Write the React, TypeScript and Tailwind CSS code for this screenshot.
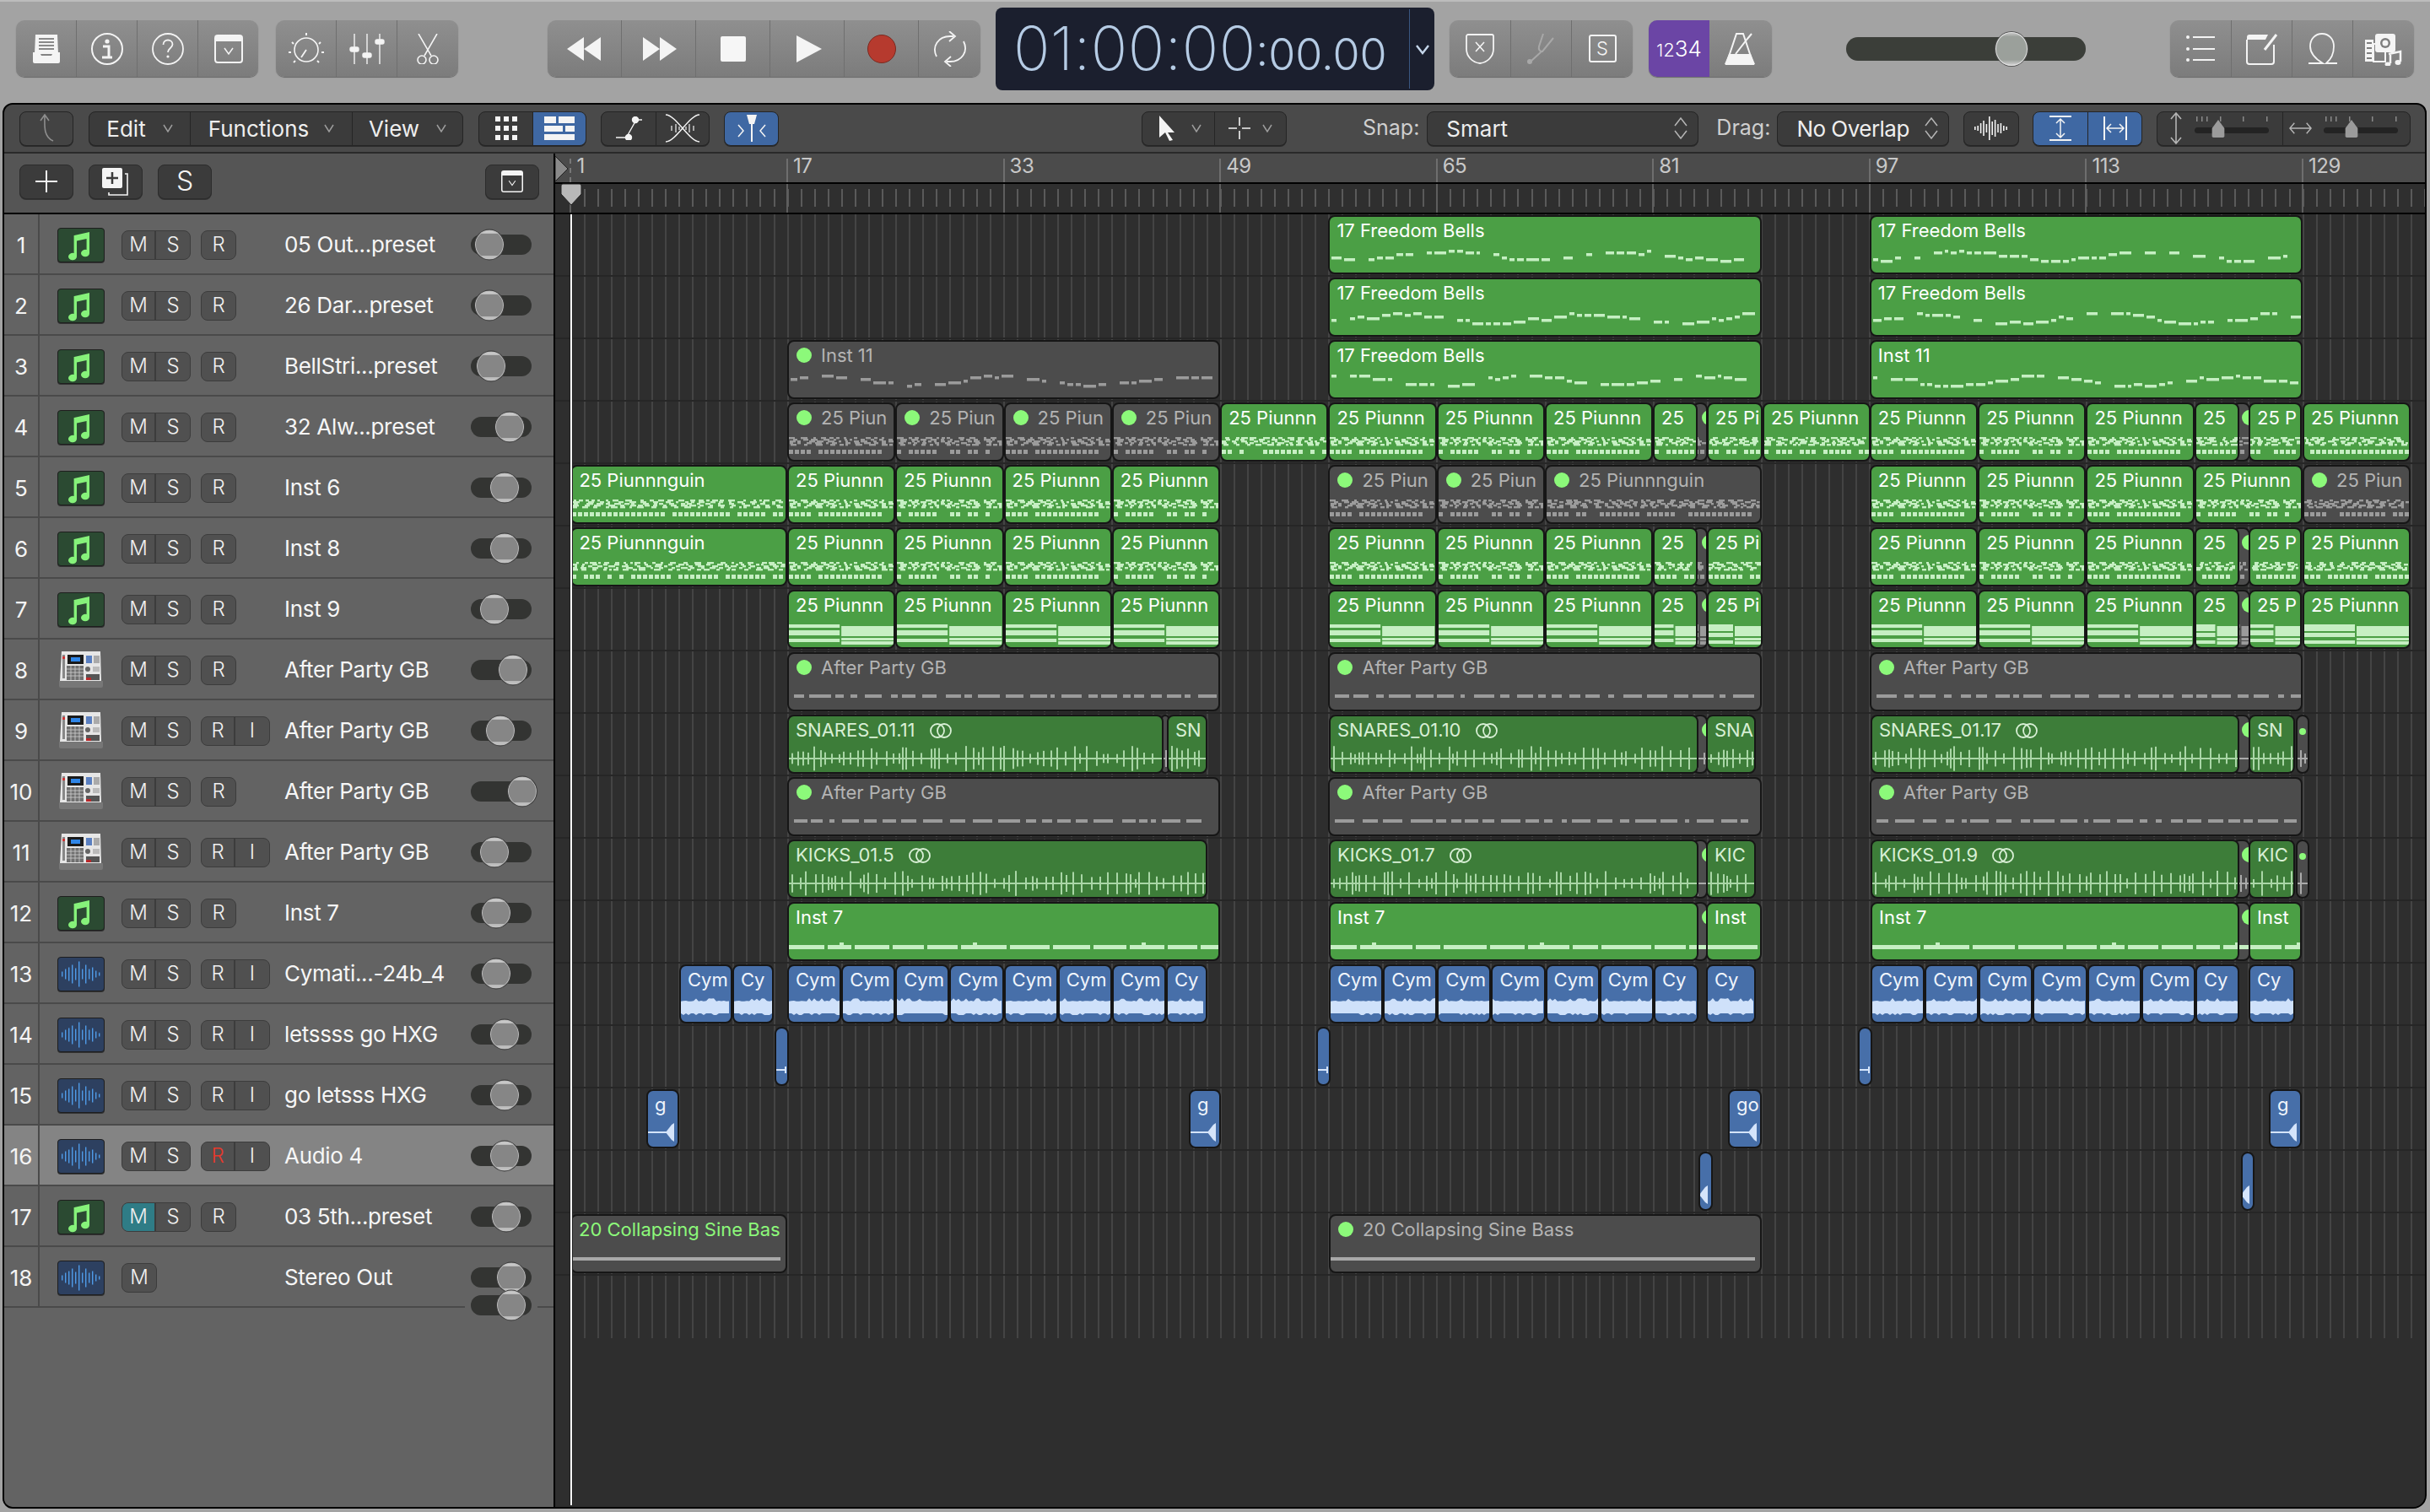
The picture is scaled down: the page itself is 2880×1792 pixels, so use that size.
import React from 'react';

const rnd = (s: number) => { const v = Math.sin(s * 12.9898 + 4.1) * 43758.5453; return v - Math.floor(v); };
const bar = (n: number) => 676.4 + 16.036 * (n - 1);

type Kind = 'green' | 'dark' | 'grey' | 'blue';
type Pat = 'dense' | 'lines' | 'melody' | 'party' | 'wave' | 'inst7' | 'cym' | 'tiny' | 'g' | 'sine' | 'none';
type Reg = { x1: number; x2: number; label?: string; kind: Kind; pat: Pat; seed: number; dot?: boolean; loop?: boolean; lime?: boolean; small?: boolean };

let sd = 1;
const mk = (x1: number, x2: number, label: string | undefined, kind: Kind, pat: Pat, extra: Partial<Reg> = {}): Reg => ({ x1, x2, label, kind, pat, seed: sd++ * 7, dot: kind === 'grey' && !!label, ...extra });

const PN = '25 Piunnn';
const pieces = (bars: number[], label: string, kind: Kind, pat: Pat) => bars.slice(0, -1).map((b, i) => mk(bar(b), bar(bars[i + 1]), label, kind, pat, { seed: (i % 2) * 100 + 11 }));

const slit = (pat: Pat) => [mk(2006, 2024, ' ', 'grey', pat), mk(2646, 2667, ' ', 'grey', pat)];
const rest = (pat: Pat, withMid: boolean) => [
  ...slit(pat),
  ...pieces([57, 65, 73, 81], PN, 'green', pat),
  mk(1959, 2012, '25', 'green', pat),
  mk(2023, 2089, '25 Pi', 'green', pat),
  ...(withMid ? [mk(2089, 2217, PN, 'green', pat)] : []),
  ...pieces([97, 105, 113, 121], PN, 'green', pat),
  mk(2601, 2654, '25', 'green', pat),
  mk(2665, 2728, '25 P', 'green', pat),
  mk(2729, 2857, PN, 'green', pat),
];

const cymGroup = (start: number, n: number, end: number) => {
  const out: Reg[] = [];
  for (let i = 0; i < n; i++) out.push(mk(start + i * 64.15, start + (i + 1) * 64.15, 'Cym', 'blue', 'cym'));
  out.push(mk(start + n * 64.15, end, 'Cy', 'blue', 'cym'));
  return out;
};

const FB = '17 Freedom Bells';
const AP = 'After Party GB';
const regionRows: Reg[][] = [
  [mk(bar(57), bar(89), FB, 'green', 'melody'), mk(bar(97), bar(129), FB, 'green', 'melody')],
  [mk(bar(57), bar(89), FB, 'green', 'melody'), mk(bar(97), bar(129), FB, 'green', 'melody')],
  [mk(bar(17), bar(49), 'Inst 11', 'grey', 'melody'), mk(bar(57), bar(89), FB, 'green', 'melody'), mk(bar(97), bar(129), 'Inst 11', 'green', 'melody')],
  [...pieces([17, 25, 33, 41, 49], '25 Piun', 'grey', 'dense'), mk(bar(49), bar(57), PN, 'green', 'dense'), ...rest('dense', true)],
  [
    mk(bar(1), bar(17), '25 Piunnnguin', 'green', 'dense'),
    ...pieces([17, 25, 33, 41, 49], PN, 'green', 'dense'),
    ...pieces([57, 65, 73], '25 Piun', 'grey', 'dense'),
    mk(bar(73), bar(89), '25 Piunnnguin', 'grey', 'dense'),
    ...pieces([97, 105, 113, 121, 129], PN, 'green', 'dense'),
    mk(bar(129), bar(137), '25 Piun', 'grey', 'dense'),
  ],
  [mk(bar(1), bar(17), '25 Piunnnguin', 'green', 'dense'), ...pieces([17, 25, 33, 41, 49], PN, 'green', 'dense'), ...rest('dense', false)],
  [...pieces([17, 25, 33, 41, 49], PN, 'green', 'lines'), ...rest('lines', false)],
  [mk(bar(17), bar(49), AP, 'grey', 'party'), mk(bar(57), bar(89), AP, 'grey', 'party'), mk(bar(97), bar(129), AP, 'grey', 'party')],
  [
    mk(1376, 1386, ' ', 'grey', 'wave'),
    mk(933, 1379, 'SNARES_01.11', 'dark', 'wave', { loop: true }),
    mk(1383, 1431, 'SN', 'dark', 'wave'),
    ...slit('wave'),
    mk(1575, 2013, 'SNARES_01.10', 'dark', 'wave', { loop: true }),
    mk(2022, 2081, 'SNA', 'dark', 'wave'),
    mk(2217, 2654, 'SNARES_01.17', 'dark', 'wave', { loop: true }),
    mk(2665, 2720, 'SN', 'dark', 'wave'),
    mk(2721, 2737, ' ', 'grey', 'wave', { small: true }),
  ],
  [mk(bar(17), bar(49), AP, 'grey', 'party'), mk(bar(57), bar(89), AP, 'grey', 'party'), mk(bar(97), bar(129), AP, 'grey', 'party')],
  [
    mk(933, 1431, 'KICKS_01.5', 'dark', 'wave', { loop: true }),
    ...slit('wave'),
    mk(1575, 2013, 'KICKS_01.7', 'dark', 'wave', { loop: true }),
    mk(2022, 2081, 'KIC', 'dark', 'wave'),
    mk(2217, 2654, 'KICKS_01.9', 'dark', 'wave', { loop: true }),
    mk(2665, 2720, 'KIC', 'dark', 'wave'),
    mk(2721, 2737, ' ', 'grey', 'wave', { small: true }),
  ],
  [
    mk(bar(17), bar(49), 'Inst 7', 'green', 'inst7'),
    ...slit('inst7'),
    mk(1575, 2013, 'Inst 7', 'green', 'inst7'),
    mk(2022, 2088, 'Inst', 'green', 'inst7'),
    mk(2217, 2654, 'Inst 7', 'green', 'inst7'),
    mk(2665, 2728, 'Inst', 'green', 'inst7'),
  ],
  [
    mk(805, 868, 'Cym', 'blue', 'cym'), mk(868, 917, 'Cy', 'blue', 'cym'),
    ...cymGroup(933, 7, 1431),
    ...cymGroup(1575, 6, 2013), mk(2022, 2081, 'Cy', 'blue', 'cym'),
    ...cymGroup(2217, 6, 2654), mk(2665, 2720, 'Cy', 'blue', 'cym'),
  ],
  [mk(918, 935, undefined, 'blue', 'tiny'), mk(1560, 1577, undefined, 'blue', 'tiny'), mk(2202, 2219, undefined, 'blue', 'tiny')],
  [mk(766, 805, 'g', 'blue', 'g'), mk(1409, 1447, 'g', 'blue', 'g'), mk(2048, 2088, 'go', 'blue', 'g'), mk(2689, 2728, 'g', 'blue', 'g')],
  [mk(2013, 2030, undefined, 'blue', 'g'), mk(2656, 2672, undefined, 'blue', 'g')],
  [mk(676, 933, '20 Collapsing Sine Bas', 'grey', 'sine', { dot: false, lime: true }), mk(1575, 2088, '20 Collapsing Sine Bass', 'grey', 'sine')],
];

function Notes({ r, w }: { r: Reg; w: number }) {
  const green = r.kind === 'green';
  const c = green ? '#c6efc3' : r.kind === 'grey' ? '#9b9b9b' : '#c6efc3';
  const items: React.ReactNode[] = [];
  const s = r.seed;
  if (r.pat === 'dense') {
    let i = 0;
    for (const y of [39, 41, 43, 45, 47]) {
      let x = Math.floor(rnd(s + y) * 6);
      while (x < w - 3) {
        i++;
        const len = 3 + Math.floor(rnd(s + i * 3.1) * 6);
        items.push(<rect key={i} x={x} y={y} width={Math.min(len, w - x)} height={2.4} fill={c} />);
        x += len + 2 + Math.floor(rnd(s + i * 1.3) * 9);
      }
    }
    for (let x = 0; x < w - 4; x += 7) {
      i++;
      if (rnd(s + i * 1.7) > 0.2) items.push(<rect key={i} x={x} y={54} width={5} height={5} fill={c} />);
    }
  } else if (r.pat === 'lines') {
    const h = w / 2;
    const a = s % 2 === 0 ? [[39, 8], [49, 5], [58, 4]] : [[39, 4], [46, 6], [56, 4]];
    const b = [[41, 12], [55, 3], [59, 4]];
    a.forEach((v, k) => items.push(<rect key={'a' + k} x={0} y={v[0]} width={h - 2} height={v[1]} fill={c} />));
    b.forEach((v, k) => items.push(<rect key={'b' + k} x={h} y={v[0]} width={h} height={v[1]} fill={c} />));
  } else if (r.pat === 'melody') {
    let x = 2, i = 0;
    while (x < w - 8) {
      i++;
      const len = 4 + Math.floor(rnd(s + i) * 12);
      const y = 45 + Math.round((Math.sin(x / 34 + s) * 5 + rnd(s + i * 2.3) * 4 - 2) / 2) * 2;
      items.push(<rect key={i} x={x} y={y} width={len} height={3.5} fill={c} />);
      x += len + (rnd(s + i * 5.1) > 0.8 ? 16 : 3);
    }
  } else if (r.pat === 'party') {
    let x = 6, i = 0;
    while (x < w - 12) {
      i++;
      const len = 5 + Math.floor(rnd(s + i) * 22);
      items.push(<rect key={i} x={x} y={48} width={len} height={4} fill={c} />);
      x += len + 4 + Math.floor(rnd(s + i * 3) * 8);
    }
  } else if (r.pat === 'inst7') {
    let x = 0, i = 0;
    while (x < w - 2) {
      i++;
      const len = Math.min(w - x, 28 + Math.floor(rnd(s + i) * 36));
      items.push(<rect key={i} x={x} y={49} width={len} height={5} fill="#c6efc3" />);
      if (i % 4 === 2) items.push(<rect key={'u' + i} x={x + 14} y={46} width={5} height={4} fill="#c6efc3" />);
      x += len + 4;
    }
  } else if (r.pat === 'wave') {
    const col = r.kind === 'grey' ? '#aaa' : '#a9d6a6';
    items.push(<rect key="l" x={0} y={49} width={w} height={2} fill={col} />);
    let i = 0;
    for (let x = 3; x < w - 2; x += 4 + Math.floor(rnd(s + x) * 9)) {
      i++;
      const h = 5 + rnd(s + i * 2.7) * 10;
      items.push(<rect key={i} x={x} y={50 - h} width={2} height={h * 2} fill={col} />);
    }
  } else if (r.pat === 'cym') {
    let top = 'M0 58 L0 41';
    let bot = '';
    for (let x = 0; x <= w; x += 3) {
      const t = 42 - (rnd(s + x) > 0.86 ? 3 : 0) - rnd(x + 1) * 1;
      const b = 56 + (rnd(s + x * 2) > 0.7 ? 2 : 0);
      top += ` L${x} ${t}`;
      bot = ` L${x} ${b}` + bot;
    }
    items.push(<path key="c" d={top + bot + 'Z'} fill="#cfe1fa" />);
  } else if (r.pat === 'tiny') {
    items.push(<rect key="a" x={0} y={48} width={12} height={2} fill="#d5e4fa" />);
    items.push(<rect key="b" x={10} y={45} width={2} height={8} fill="#d5e4fa" />);
  } else if (r.pat === 'g') {
    items.push(<rect key="a" x={0} y={48} width={w - 8} height={2} fill="#d5e4fa" />);
    items.push(<polygon key="b" points={`${w - 14},49 ${w - 7},40 ${w - 4},38 ${w - 4},60 ${w - 7},58`} fill="#d5e4fa" />);
  } else if (r.pat === 'sine') {
    items.push(<rect key="a" x={0} y={49} width={w - 6} height={4} fill="#a8a8a8" />);
  }
  return <svg className="absolute left-0 top-0" width={w} height={66}>{items}</svg>;
}

const regBg: Record<Kind, string> = {
  green: 'bg-[#4b9f45] text-white',
  dark: 'bg-[#3d7d39] text-[#d8efd5]',
  grey: 'bg-[#4c4c4c] text-[#b4b4b4]',
  blue: 'bg-[#476fa9] text-[#f0f5fc]',
};

function Region({ r }: { r: Reg }) {
  const w = r.x2 - r.x1;
  return (
    <div className={`absolute top-px h-[70px] rounded-[8px] border-2 border-[#161616] overflow-hidden ${regBg[r.kind]}`} style={{ left: r.x1 - 658, width: w }}>
      <Notes r={r} w={w - 4} />
      {r.dot && !r.small && <span className="absolute left-[9px] top-[7px] size-[18px] rounded-full bg-[#8cf97a]" />}
      {r.small && <span className="absolute left-[2px] top-[14px] size-[8px] rounded-full bg-[#8cf97a]" />}
      {r.label && r.label !== ' ' && (
        <span className={`absolute top-[3px] flex items-center text-[22px] leading-[26px] whitespace-nowrap ${r.dot ? 'left-[38px]' : 'left-[8px]'} ${r.lime ? 'text-[#8cf97a]' : ''}`}>
          {r.label}
          {r.loop && (
            <svg className="ml-[16px] mt-[2px]" width="28" height="18" viewBox="0 0 28 18" fill="none" stroke="#d8efd5" strokeWidth="1.8"><ellipse cx="10" cy="9" rx="8" ry="8" /><ellipse cx="18" cy="9" rx="8" ry="8" /></svg>
          )}
        </span>
      )}
    </div>
  );
}

/* ------- icons ------- */
const W = '#f4f4f4';
const Library = () => (
  <svg width="34" height="36" viewBox="0 0 34 36"><path d="M4 1h26l1 23H3z" fill={W} /><path d="M8 6h18M8 10h18M8 14h18M8 18h18" stroke="#8a8a8a" strokeWidth="2" /><path d="M1 22h8l2 4h12l2-4h8v11a2 2 0 0 1-2 2H3a2 2 0 0 1-2-2z" fill={W} /></svg>
);
const Info = () => (
  <svg width="40" height="40" viewBox="0 0 40 40" fill="none"><circle cx="20" cy="20" r="18" stroke={W} strokeWidth="2" /><circle cx="20" cy="11" r="2.6" fill={W} /><path d="M15 17h7v12M14 30h12" stroke={W} strokeWidth="3" /></svg>
);
const Help = () => (
  <svg width="40" height="40" viewBox="0 0 40 40" fill="none"><circle cx="20" cy="20" r="18" stroke={W} strokeWidth="1.8" /><path d="M14.5 15c0-3.5 2.5-5.5 5.5-5.5s5.5 2 5.5 5c0 4.5-5.5 4.5-5.5 9.5" stroke={W} strokeWidth="1.8" /><circle cx="20" cy="29" r="1.6" fill={W} /></svg>
);
const Smart = ({ s = 34 }: { s?: number }) => (
  <svg width={s} height={s} viewBox="0 0 34 34" fill="none"><rect x="1" y="1" width="32" height="32" rx="3" stroke={W} strokeWidth="2" /><path d="M1 8V4a3 3 0 0 1 3-3h26a3 3 0 0 1 3 3v4z" fill={W} /><path d="M12 16l5 7 5-7" stroke={W} strokeWidth="1.5" /></svg>
);
const Dial = () => (
  <svg width="44" height="40" viewBox="0 0 44 40" fill="none" stroke={W}><circle cx="22" cy="21" r="14" strokeWidth="1.6" /><path d="M22 21l-6 9" strokeWidth="1.8" /><path d="M22 1v3M5 12l2 2M39 12l-2 2M1 24h3M43 24h-3M7 36l2-2M37 36l-2-2" strokeWidth="2" /></svg>
);
const Sliders = () => (
  <svg width="42" height="36" viewBox="0 0 42 36" fill="none" stroke={W} strokeWidth="1.4"><path d="M6 0v36M21 0v36M36 0v36" /><rect x="1" y="16" width="10" height="5" rx="2" fill={W} /><rect x="16" y="23" width="10" height="5" rx="2" fill={W} /><rect x="31" y="7" width="10" height="5" rx="2" fill={W} /></svg>
);
const Scissors = () => (
  <svg width="28" height="36" viewBox="0 0 28 36" fill="none" stroke={W} strokeWidth="1.6"><path d="M3 0l15 26M25 0L10 26" /><ellipse cx="7" cy="31" rx="5" ry="5" /><ellipse cx="21" cy="31" rx="5" ry="5" /></svg>
);
const Rew = () => <svg width="42" height="28" viewBox="0 0 42 28" fill={W}><path d="M0 14L20 0v28zM20 14L40 0v28z" /></svg>;
const Ffw = () => <svg className="ml-[4px]" width="42" height="28" viewBox="0 0 42 28" fill={W}><path d="M0 0l20 14L0 28zM20 0l20 14-20 14z" /></svg>;
const Cycle = () => (
  <svg width="42" height="42" viewBox="0 0 42 42" fill="none" stroke={W} strokeWidth="1.8"><path d="M5 30C-1 18 7 6 21 6h4" /><path d="M20 0l7 6-7 6" /><path d="M37 12c6 12-2 24-16 24h-4" /><path d="M22 30l-7 6 7 6" /></svg>
);
const Shield = () => (
  <svg width="34" height="36" viewBox="0 0 34 36" fill="none" stroke={W} strokeWidth="1.8"><path d="M3 1h28a2 2 0 0 1 2 2v15c0 9-7 16-16 17C8 34 1 27 1 18V3a2 2 0 0 1 2-2z" /><path d="M12 10l10 11M22 10L12 21" strokeWidth="1.6" /></svg>
);
const Fork = () => (
  <svg width="36" height="38" viewBox="0 0 36 38" fill="none" stroke="#a8a8a8" strokeWidth="2"><path d="M20 1l-5 15c-1 4 1 6 4 6l13-16M18 22L5 34" /><circle cx="4" cy="34" r="3" fill="#a8a8a8" stroke="none" /></svg>
);
const Metro = () => (
  <svg width="40" height="40" viewBox="0 0 40 40"><path d="M15 2h8l12 36H3z" fill="none" stroke={W} strokeWidth="2" /><path d="M6 26h26l5 12H1z" fill={W} /><path d="M14 26L28 8l5-6" stroke={W} strokeWidth="2" /></svg>
);
const ListI = () => (
  <svg width="34" height="34" viewBox="0 0 34 34" fill="none" stroke={W} strokeWidth="2"><path d="M8 3h26M8 17h26M8 30h26" /><circle cx="2" cy="3" r="2" fill={W} stroke="none" /><circle cx="2" cy="17" r="2" fill={W} stroke="none" /><circle cx="2" cy="30" r="2" fill={W} stroke="none" /></svg>
);
const Note = () => (
  <svg width="38" height="38" viewBox="0 0 38 38" fill="none"><path d="M1 8V34a3 3 0 0 0 3 3h26a3 3 0 0 0 3-3V14" stroke={W} strokeWidth="2" /><path d="M1 8V5a3 3 0 0 1 3-3h22l-3 6z" fill={W} /><path d="M22 20L36 2" stroke={W} strokeWidth="3" /></svg>
);
const Loops = () => (
  <svg width="36" height="38" viewBox="0 0 36 38" fill="none" stroke={W} strokeWidth="1.8"><path d="M1 36h17C8 30 3 24 3 16 3 7 9 1 17 1s14 6 14 15c0 8-3 15-9 20h13" /></svg>
);
const Media = () => (
  <svg width="44" height="40" viewBox="0 0 44 40"><rect x="0" y="9" width="10" height="26" fill={W} /><path d="M2 13h6M2 19h6M2 25h6M2 31h6" stroke="#7e7e7e" strokeWidth="2" /><rect x="10" y="14" width="14" height="21" fill="none" stroke={W} strokeWidth="2" /><rect x="12" y="2" width="24" height="22" rx="3" fill={W} /><circle cx="24" cy="13" r="6" fill="#7e7e7e" /><circle cx="24" cy="13" r="3.5" fill={W} /><path d="M28 26l14-3v12" stroke={W} strokeWidth="2.5" fill="none" /><ellipse cx="39" cy="36" rx="3.5" ry="3" fill={W} /><ellipse cx="27" cy="38" rx="3.5" ry="2.5" fill={W} /><path d="M30 27v10" stroke={W} strokeWidth="2.5" /></svg>
);
const Chevron = ({ c = '#9c9c9c' }: { c?: string }) => (
  <svg width="12" height="10" viewBox="0 0 12 10" fill="none" stroke={c} strokeWidth="1.5"><path d="M1 1l5 8 5-8" /></svg>
);
const UpDown = () => (
  <svg width="16" height="26" viewBox="0 0 16 26" fill="none" stroke="#b5b5b5" strokeWidth="1.5"><path d="M1 10l7-9 7 9M1 16l7 9 7-9" /></svg>
);

const NoteIcon = () => (
  <svg width="52" height="37" viewBox="0 0 52 37"><path d="M18 7L36 3V28a5 4.2 0 1 1-3.4-3.9V11L21 13.6V32a5 4.2 0 1 1-3.4-3.9V7z" fill="#86f27a" /></svg>
);
const WaveIcon = () => {
  const hs = [6, 12, 16, 22, 14, 30, 12, 22, 12, 16, 8, 4];
  return <svg width="52" height="37" viewBox="0 0 52 37">{hs.map((h, i) => <rect key={i} x={3 + i * 4} y={18.5 - h / 2} width="1.4" height={h} fill="#4f9be8" />)}</svg>;
};
const Sampler = () => (
  <svg width="56" height="46" viewBox="0 0 56 46">
    <path d="M5 1h46l1 35H3z" fill="#e6e6e6" />
    <path d="M2 36h52v6a2 2 0 0 1-2 2H4a2 2 0 0 1-2-2z" fill="#777" />
    <rect x="12" y="5" width="19" height="11" fill="#1a1a1a" /><rect x="16" y="8" width="11" height="5" fill="#2f86e8" />
    <rect x="11" y="18" width="20" height="17" fill="#707070" />
    <path d="M16 18v17M21 18v17M26 18v17M11 22h20M11 26h20M11 30h20" stroke="#d0d0d0" strokeWidth=".8" />
    <rect x="34" y="6" width="7" height="9" fill="#5a7fc0" /><rect x="43" y="6" width="7" height="9" fill="#aaa" />
    <circle cx="36" cy="22" r="3" fill="#666" /><rect x="42" y="19" width="8" height="6" fill="#bbb" />
    <rect x="34" y="28" width="16" height="7" fill="#555" /><rect x="34" y="32" width="6" height="3" fill="#b8282a" />
    <rect x="6" y="5" width="3" height="28" fill="#888" /><rect x="6" y="7" width="3" height="3" fill="#c33" />
  </svg>
);

const Cell = ({ w, children, className = '' }: { w: string; children?: React.ReactNode; className?: string }) => (
  <div className={`flex h-full shrink-0 items-center justify-center border-r border-[#6f6f6f] last:border-r-0 ${w} ${className}`}>{children}</div>
);
const TopGroup = ({ className, children }: { className: string; children: React.ReactNode }) => (
  <div className={`flex h-[67px] shrink-0 overflow-hidden rounded-[10px] bg-[linear-gradient(180deg,#8f8f8f,#7c7c7c)] shadow-[0_1px_1px_#666] ${className}`}>{children}</div>
);

const DkGroup = ({ className, children }: { className: string; children: React.ReactNode }) => (
  <div className={`flex h-[41px] shrink-0 overflow-hidden rounded-[8px] border border-[#252525] bg-[#3b3b3b] text-[26px] text-[#eeeeee] shadow-[0_1px_0_#2b2b2b] ${className}`}>{children}</div>
);
const DkCell = ({ className = '', children }: { className?: string; children?: React.ReactNode }) => (
  <div className={`flex h-full items-center justify-center border-r border-[#252525] last:border-r-0 ${className}`}>{children}</div>
);

const Knob = ({ left, z = '' }: { left: number; z?: string }) => (
  <span className={`absolute top-1/2 h-[37px] w-[36px] -translate-y-1/2 rounded-[50%] border border-[#3a3a3a] bg-[linear-gradient(180deg,#c8c8c8_0,#c8c8c8_11%,#868686_13%,#868686_86%,#b8b8b8_88%,#c8c8c8_100%)] shadow-[inset_0_0_0_1px_#bdbdbd] ${z}`} style={{ left }} />
);

type Track = { name: string; icon: 'note' | 'wave' | 'sampler'; inp?: boolean; knob: number };
const tracks: Track[] = [
  { name: '05 Out...preset', icon: 'note', knob: 562 },
  { name: '26 Dar...preset', icon: 'note', knob: 562 },
  { name: 'BellStri...preset', icon: 'note', knob: 564 },
  { name: '32 Alw...preset', icon: 'note', knob: 586 },
  { name: 'Inst 6', icon: 'note', knob: 580 },
  { name: 'Inst 8', icon: 'note', knob: 580 },
  { name: 'Inst 9', icon: 'note', knob: 568 },
  { name: 'After Party GB', icon: 'sampler', knob: 590 },
  { name: 'After Party GB', icon: 'sampler', inp: true, knob: 575 },
  { name: 'After Party GB', icon: 'sampler', knob: 601 },
  { name: 'After Party GB', icon: 'sampler', inp: true, knob: 568 },
  { name: 'Inst 7', icon: 'note', knob: 570 },
  { name: 'Cymati...-24b_4', icon: 'wave', inp: true, knob: 570 },
  { name: 'letssss go HXG', icon: 'wave', inp: true, knob: 580 },
  { name: 'go letsss HXG', icon: 'wave', inp: true, knob: 580 },
  { name: 'Audio 4', icon: 'wave', inp: true, knob: 580 },
  { name: '03 5th...preset', icon: 'note', knob: 582 },
  { name: 'Stereo Out', icon: 'wave', knob: 588 },
];

const MsBtn = ({ className = '', children }: { className?: string; children: React.ReactNode }) => (
  <div className={`flex h-full w-[40px] items-center justify-center border-r-2 border-[#3c3c3c] text-[24px] font-light last:border-r-0 ${className}`}>{children}</div>
);

function TrackRow({ t, i }: { t: Track; i: number }) {
  const sel = i === 15;
  const master = i === 17;
  return (
    <div className={`relative flex h-[72px] border-b-2 border-[#4a4a4a] ${sel ? 'bg-[#848484]' : 'bg-[#636363]'}`}>
      <div className="flex h-full w-[42px] shrink-0 items-center justify-center border-r-2 border-[#4a4a4a] pt-[4px] text-[26px] leading-none text-[#f4f4f4]">{i + 1}</div>
      <div className="flex h-full flex-1 items-center pt-[2px]">
        {t.icon === 'sampler' ? (
          <div className="ml-[21px] flex h-[46px] w-[56px] shrink-0 items-center justify-center"><Sampler /></div>
        ) : (
          <div className={`ml-[21px] flex h-[41px] w-[56px] shrink-0 items-center justify-center rounded-[4px] border border-[#1e1e1e] shadow-[0_1px_0_#333] ${t.icon === 'note' ? 'bg-[#2b4a32]' : 'bg-[#2d4060]'}`}>
            {t.icon === 'note' ? <NoteIcon /> : <WaveIcon />}
          </div>
        )}
        <div className="ml-[20px] h-[35px] w-[81px] shrink-0">
          <div className="inline-flex h-full overflow-hidden rounded-[8px] border border-[#3c3c3c] bg-[#505050] text-[#f0f0f0]">
            <MsBtn className={i === 16 ? 'bg-[#2f7c86]' : ''}>M</MsBtn>
            {!master && <MsBtn>S</MsBtn>}
          </div>
        </div>
        <div className="ml-[13px] h-[35px] w-[82px] shrink-0">
          {!master && (
            <div className="inline-flex h-full overflow-hidden rounded-[8px] border border-[#3c3c3c] bg-[#505050] text-[#f0f0f0]">
              <MsBtn className={sel ? 'text-[#e8392c]' : ''}>R</MsBtn>
              {t.inp && <MsBtn>I</MsBtn>}
            </div>
          )}
        </div>
        <div className="ml-[17px] w-[221px] shrink-0 whitespace-nowrap text-[26px] leading-none tracking-[-0.012em] text-[#f6f6f6]">{t.name}</div>
        <div className="relative h-[24px] w-[72px] shrink-0 rounded-full bg-[#333432]">
          <Knob left={t.knob - 558} />
        </div>
      </div>
      {master && (
        <div className="absolute bottom-[-11px] left-[546px] h-[24px] bg-[#636363] px-[7px]">
          <div className="relative h-[24px] w-[72px] rounded-full bg-[#333432]"><Knob left={30} /></div>
        </div>
      )}
    </div>
  );
}

const rulerBars = [1, 17, 33, 49, 65, 81, 97, 113, 129];

export default function App() {
  return (
    <div className="relative flex h-[1792px] w-[2880px] flex-col overflow-hidden bg-[#a3a3a3] font-[Inter,sans-serif]">
      {/* top toolbar */}
      <div className="flex h-[122px] shrink-0 items-center border-t-2 border-[#bcbcbc] pb-[9px] pl-[19px]">
        <TopGroup className="w-[287px]">
          <Cell w="w-[72px]"><Library /></Cell><Cell w="w-[72px]"><Info /></Cell><Cell w="w-[72px]"><Help /></Cell><Cell w="w-[71px]"><Smart /></Cell>
        </TopGroup>
        <TopGroup className="ml-[21px] w-[216px]">
          <Cell w="w-[72px]"><Dial /></Cell><Cell w="w-[72px]"><Sliders /></Cell><Cell w="w-[72px]"><Scissors /></Cell>
        </TopGroup>
        <TopGroup className="ml-[106px] w-[513px]">
          <Cell w="w-[88px]"><Rew /></Cell>
          <Cell w="w-[88px]"><Ffw /></Cell>
          <Cell w="w-[88px]"><span className="size-[30px] rounded-[2px] bg-[#f6f6f6]" /></Cell>
          <Cell w="w-[88px]"><svg className="ml-[4px]" width="30" height="32" viewBox="0 0 30 32"><path d="M0 0l30 16L0 32z" fill={W} /></svg></Cell>
          <Cell w="w-[88px]"><span className="h-[34px] w-[34px] rounded-full border border-[#7a2a20] bg-[#b63a2e]" /></Cell>
          <Cell w="w-[73px]"><Cycle /></Cell>
        </TopGroup>
        {/* LCD */}
        <div className="ml-[18px] flex h-[98px] w-[520px] shrink-0 items-center rounded-[8px] bg-[#1b1f2e] text-[#b5cbe4]">
          <div className="flex w-[490px] items-baseline pb-[2px] pl-[21px] font-extralight">
            <span className="text-[72px] leading-none tracking-[0.005em]">01:00:00</span>
            <span className="text-[52px] font-light leading-none">:00.00</span>
          </div>
          <div className="flex h-[94px] flex-1 items-center justify-center border-l border-[#3a5680] pt-[2px]">
            <svg width="16" height="12" viewBox="0 0 16 12" fill="none" stroke="#c5d6ea" strokeWidth="2.4"><path d="M1 1l7 9 7-9" /></svg>
          </div>
        </div>
        <TopGroup className="ml-[18px] w-[217px]">
          <Cell w="w-[73px]"><Shield /></Cell>
          <Cell w="w-[72px]"><Fork /></Cell>
          <Cell w="w-[72px]"><span className="flex h-[33px] w-[33px] items-center justify-center rounded-[3px] border-2 border-[#f4f4f4] text-[22px] font-light text-[#f4f4f4]">S</span></Cell>
        </TopGroup>
        <TopGroup className="ml-[19px] w-[146px]">
          <Cell w="w-[72px]" className="border-r-0 bg-[#6b45a5]">
            <span className="flex items-baseline font-light leading-none text-white"><span className="text-[20px]">1</span><span className="text-[22px]">2</span><span className="text-[26px]">34</span></span>
          </Cell>
          <Cell w="w-[74px]"><Metro /></Cell>
        </TopGroup>
        <div className="relative ml-[88px] h-[28px] w-[284px] shrink-0 rounded-full bg-[#3b3e39]">
          <span className="absolute left-[177px] top-[-6px] h-[40px] w-[38px] rounded-[50%] border border-[#e4e4e4] bg-[linear-gradient(180deg,#c8c8c8_0,#9ba09b_12%,#9ba09b_84%,#d0d0d0_100%)] shadow-[0_0_0_1px_#555]" />
        </div>
        <TopGroup className="ml-[100px] w-[289px]">
          <Cell w="w-[73px]"><ListI /></Cell><Cell w="w-[72px]"><Note /></Cell><Cell w="w-[72px]"><Loops /></Cell><Cell w="w-[72px]"><Media /></Cell>
        </TopGroup>
      </div>

      {/* window */}
      <div className="ml-[3px] flex h-[1666px] w-[2873px] shrink-0 flex-col overflow-hidden rounded-[12px] rounded-br-[16px] border-2 border-black bg-[#2e2e2e]">
        {/* toolbar 2 */}
        <div className="flex h-[58px] shrink-0 items-center border-b-2 border-[#2a2a2a] bg-[#4a4a4a] pl-[18px]">
          <DkGroup className="w-[64px] border-[#333] bg-[#434343]"><DkCell className="w-full">
            <svg width="20" height="34" viewBox="0 0 20 34" fill="none" stroke="#8e8e8e" strokeWidth="1.6"><path d="M3 8l5-7 5 7M8 1c0 12-2 26 10 31" /></svg>
          </DkCell></DkGroup>
          <DkGroup className="ml-[18px] w-[444px]">
            <DkCell className="w-[120px] gap-[20px]">Edit<Chevron /></DkCell>
            <DkCell className="w-[192px] gap-[18px]">Functions<Chevron /></DkCell>
            <DkCell className="flex-1 gap-[20px]">View<Chevron /></DkCell>
          </DkGroup>
          <DkGroup className="ml-[18px] w-[128px]">
            <DkCell className="w-[64px]">
              <svg width="26" height="28" viewBox="0 0 26 28" fill={W}>{[0, 10, 20].map(x => [0, 11, 22].map(y => <rect key={`${x}${y}`} x={x} y={y} width="6" height="6" />))}</svg>
            </DkCell>
            <DkCell className="flex-1 bg-[#3f68a3]">
              <svg width="36" height="28" viewBox="0 0 36 28" fill={W}><rect x="0" y="0" width="14" height="8" /><rect x="17" y="0" width="19" height="8" /><rect x="0" y="11" width="22" height="7" /><rect x="25" y="11" width="11" height="7" /><rect x="0" y="21" width="36" height="7" /></svg>
            </DkCell>
          </DkGroup>
          <DkGroup className="ml-[17px] w-[129px]">
            <DkCell className="w-[65px]">
              <svg width="32" height="28" viewBox="0 0 32 28" fill="none" stroke={W} strokeWidth="1.4"><path d="M1 25h13M15 22L24 6M26 4h6" /><circle cx="16" cy="25" r="3.5" fill={W} /><circle cx="24" cy="4" r="3.5" fill={W} /></svg>
            </DkCell>
            <DkCell className="flex-1">
              <svg width="42" height="34" viewBox="0 0 42 34" fill="none" stroke={W} strokeWidth="1.5"><path d="M1 1c12 0 28 32 40 32M1 33C13 33 29 1 41 1" /><path d="M8 14v6M13 12v10M17 15v4M25 15v4M29 12v10M34 14v6" strokeWidth="1.2" /></svg>
            </DkCell>
          </DkGroup>
          <DkGroup className="ml-[17px] w-[65px] bg-[#3f68a3]"><DkCell className="w-full">
            <svg width="34" height="32" viewBox="0 0 34 32" fill="none" stroke={W}><path d="M11 0h12l-3 11h-6z" fill={W} stroke="none" /><path d="M17 8v24" strokeWidth="2" /><path d="M1 12l6 7-6 7M33 12l-6 7 6 7" strokeWidth="1.5" /></svg>
          </DkCell></DkGroup>

          <DkGroup className="ml-[430px] w-[172px]">
            <DkCell className="w-[86px] gap-[18px] pl-[4px]">
              <svg width="20" height="30" viewBox="0 0 20 30" fill={W}><path d="M0 0l18 20h-8l6 9-4 1-5-10-7 6z" /></svg><Chevron />
            </DkCell>
            <DkCell className="flex-1 gap-[14px]">
              <svg width="26" height="26" viewBox="0 0 26 26" fill="none" stroke={W} strokeWidth="1.6"><path d="M13 0v10M13 16v10M0 13h10M16 13h10" /></svg><Chevron />
            </DkCell>
          </DkGroup>
          <span className="ml-[90px] text-[25px] text-[#cfcfcf]">Snap:</span>
          <DkGroup className="ml-[9px] w-[322px] items-center justify-between px-[22px] pr-[12px]"><span>Smart</span><UpDown /></DkGroup>
          <span className="ml-[21px] text-[25px] text-[#cfcfcf]">Drag:</span>
          <DkGroup className="ml-[8px] w-[204px] items-center justify-between px-[22px] pr-[12px]"><span className="whitespace-nowrap tracking-[-0.02em]">No Overlap</span><UpDown /></DkGroup>
          <DkGroup className="ml-[17px] w-[66px]"><DkCell className="w-full">
            <svg width="44" height="28" viewBox="0 0 44 28" fill={W}>{[4, 6, 12, 18, 10, 28, 16, 20, 10, 12, 6, 4].map((h, i) => <rect key={i} x={2 + i * 3.4} y={14 - h / 2} width="1.6" height={h} />)}</svg>
          </DkCell></DkGroup>
          <DkGroup className="ml-[16px] w-[130px] bg-[#3f68a3]">
            <DkCell className="w-[65px]">
              <svg width="28" height="30" viewBox="0 0 28 30" fill="none" stroke={W} strokeWidth="2"><path d="M1 1h26M1 29h26" /><path d="M14 4v22M9 9l5-5 5 5M9 21l5 5 5-5" strokeWidth="1.5" /></svg>
            </DkCell>
            <DkCell className="flex-1">
              <svg width="28" height="30" viewBox="0 0 28 30" fill="none" stroke={W} strokeWidth="2"><path d="M1 1v28M27 1v28" /><path d="M4 15h20M9 10l-5 5 5 5M19 10l5 5-5 5" strokeWidth="1.5" /></svg>
            </DkCell>
          </DkGroup>
          <DkGroup className="ml-[17px] w-[301px]">
            <DkCell className="w-[149px] justify-start pl-[14px]">
              <svg width="16" height="38" viewBox="0 0 16 38" fill="none" stroke="#b5b5b5" strokeWidth="1.6"><path d="M8 1v36M2 8l6-7 6 7M2 30l6 7 6-7" /></svg>
              <ZoomSl thumb={19} />
            </DkCell>
            <DkCell className="flex-1 justify-start pl-[7px]">
              <svg width="27" height="18" viewBox="0 0 30 18" fill="none" stroke="#b5b5b5" strokeWidth="1.6"><path d="M1 9h28M7 2L1 9l6 7M23 2l6 7-6 7" /></svg>
              <ZoomSl thumb={24} />
            </DkCell>
          </DkGroup>
        </div>

        {/* header row */}
        <div className="flex h-[72px] shrink-0 border-b-2 border-black">
          <div className="relative flex w-[653px] shrink-0 items-center border-r-2 border-black bg-[#555555] pb-[4px] pl-[18px]">
            <HBtn><svg width="26" height="26" viewBox="0 0 26 26" stroke={W} strokeWidth="2"><path d="M13 0v26M0 13h26" /></svg></HBtn>
            <HBtn className="ml-[18px]"><svg width="34" height="34" viewBox="0 0 34 34" fill="none"><rect x="1" y="1" width="24" height="24" rx="2" fill={W} /><path d="M13 6v14M6 13h14" stroke="#3b3b3b" strokeWidth="2.5" /><path d="M28 8h3v25H9v-3" stroke={W} strokeWidth="1.6" /></svg></HBtn>
            <HBtn className="ml-[18px]"><span className="text-[32px] font-light leading-none text-[#f4f4f4]">S</span></HBtn>
            <HBtn className="ml-[324px]"><Smart s={26} /></HBtn>
          </div>
          <div className="relative flex-1">
            <div className="relative h-[36px] border-b-2 border-black bg-[#4b4b4b]">
              {rulerBars.map(b => (
                <div key={b} className={`absolute top-[6px] h-[28px] border-l-2 pl-[6px] text-[24px] leading-[18px] text-[#c8c8c8] tracking-[-0.02em] ${b === 1 ? 'border-dashed border-[#777777]' : 'border-[#6e6e6e]'}`} style={{ left: bar(b) - 658 - 1 }}>{b}</div>
              ))}
            </div>
            <div className="relative h-[34px] bg-[#2f2f2f]">
              <div className="absolute left-[34px] right-0 top-[6px] h-[21px] bg-[repeating-linear-gradient(90deg,#5a5a5a_0,#5a5a5a_2px,transparent_2px,transparent_16.036px)]" />
              {rulerBars.map(b => (
                <div key={b} className="absolute top-0 h-full w-[2px] bg-[#5e5e5e]" style={{ left: bar(b) - 658 - 1 }} />
              ))}
            </div>
            <svg className="absolute left-0 top-[3px]" width="16" height="30" viewBox="0 0 16 30"><path d="M0 0l15 15L0 30z" fill="#8a8a8a" stroke="#222" /></svg>
            <svg className="absolute left-[6px] top-[35px]" width="26" height="27" viewBox="0 0 26 27"><path d="M3 1h20a2 2 0 0 1 2 2v10l-12 13L1 13V3a2 2 0 0 1 2-2z" fill="#b8b8b8" stroke="#222" /></svg>
          </div>
        </div>

        {/* body */}
        <div className="flex min-h-0 flex-1">
          <div className="relative w-[653px] shrink-0 border-r-2 border-black bg-[#636363]">
            {tracks.map((t, i) => <TrackRow key={i} t={t} i={i} />)}
          </div>
          <div className="relative flex-1 overflow-hidden bg-[#2e2e2e]">
            <div className="absolute left-[34px] right-[3px] top-0 h-[1332px] bg-[repeating-linear-gradient(90deg,#444444_0,#444444_2px,transparent_2px,transparent_16.036px)]" />
            <div className="relative">
              {regionRows.map((rs, i) => (
                <div key={i} className="relative h-[74px] border-b-2 border-[#262626]">
                  {rs.map((r, j) => <Region key={j} r={r} />)}
                </div>
              ))}
            </div>
            <div className="absolute bottom-[2px] left-[17px] top-[-34px] w-[4px] border-x border-[#222] bg-white" />
          </div>
        </div>
      </div>
    </div>
  );
}

function HBtn({ className = '', children }: { className?: string; children: React.ReactNode }) {
  return <div className={`flex h-[41px] w-[64px] shrink-0 items-center justify-center rounded-[8px] border border-[#2c2c2c] bg-[#3b3b3b] shadow-[0_1px_0_#333] ${className}`}>{children}</div>;
}

function ZoomSl({ thumb }: { thumb: number }) {
  return (
    <div className="relative ml-[14px] h-full w-[88px]">
      <svg className="absolute left-0 top-[5px]" width="88" height="8" viewBox="0 0 88 8" fill="#8a8a8a">{[2, 8, 14, 30, 57, 85].map(x => <rect key={x} x={x} width="1.5" height="6" />)}</svg>
      <div className="absolute left-0 right-0 top-[18px] h-[7px] rounded-full bg-[#232323]" />
      <svg className="absolute top-[9px]" style={{ left: thumb }} width="18" height="22" viewBox="0 0 18 24"><path d="M9 0l8 11v10a2 2 0 0 1-2 2H3a2 2 0 0 1-2-2V11z" fill="#9b9b9b" /></svg>
    </div>
  );
}
